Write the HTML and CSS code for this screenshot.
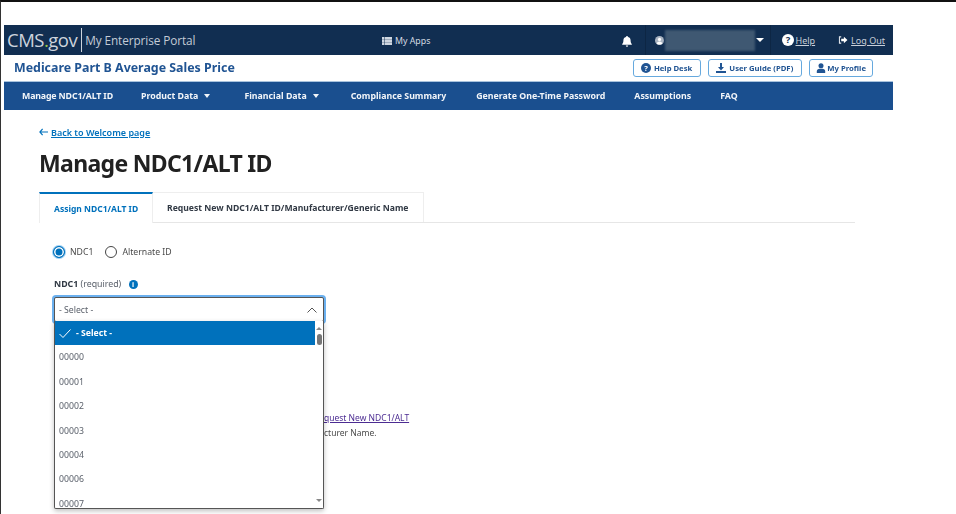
FILE: index.html
```html
<!DOCTYPE html>
<html lang="en">
<head>
<meta charset="utf-8">
<title>Manage NDC1/ALT ID</title>
<link rel="stylesheet" href="styles.css">
</head>
<body>
<div class="frame">
  <div class="app">
    <header class="topbar">
      <div class="brand">
        <span class="logo">CMS<span class="dot">.</span>gov</span>
        <span class="portal">My Enterprise Portal</span>
      </div>
      <a class="apps">
        <svg class="ic-apps" viewBox="0 0 10 8"><path d="M0 0h2.500v2.400H0zM0 2.800h2.500v2.400H0zM0 5.600h2.500V8H0zM3 0h7v2.400H3zM3 2.800h7v2.400H3zM3 5.600h7V8H3z" fill="#cfd6e0"/></svg>
        My Apps
      </a>
      <div class="tools">
        <svg class="ic-bell" viewBox="0 0 10 11"><path d="M5 0a1 1 0 0 1 1 1c2 .4 2.600 2 2.600 3.600 0 2 .6 2.800 1.200 3.400v.8H.2V8C.8 7.400 1.400 6.600 1.400 4.600 1.400 3 2 1.400 4 1a1 1 0 0 1 1-1zM3.800 9.500h2.400A1.200 1.200 0 0 1 3.800 9.500z" fill="#fff"/></svg>
        <div class="user">
          <svg class="ic-user" viewBox="0 0 10 10"><circle cx="5" cy="5" r="5" fill="#aab4c2"/><circle cx="5" cy="3.800" r="1.800" fill="#fff"/><path d="M1.800 8.200a3.400 3 0 0 1 6.400 0 5 5 0 0 1-6.400 0z" fill="#fff"/></svg>
          <span class="blur"></span>
          <span class="caret-w"></span>
        </div>
        <a class="help">
          <svg class="ic-help" viewBox="0 0 12 12"><circle cx="6" cy="6" r="6" fill="#fff"/><text x="6" y="9.300" text-anchor="middle" class="ic-q">?</text></svg>
          <span>Help</span>
        </a>
        <a class="logout">
          <svg class="ic-logout" viewBox="0 0 11 9"><path d="M3.500 1H1.500v7h2" fill="none" stroke="#dfe3ea" stroke-width="1.200"/><path d="M3.500 3h3V.8L10.500 4.500 6.500 8.200V6h-3z" fill="#fff"/></svg>
          <span>Log Out</span>
        </a>
      </div>
    </header>
    <div class="subbar">
      <div class="appname">Medicare Part B Average Sales Price</div>
      <div class="actions">
        <a class="btn">
          <svg class="ic-btn" viewBox="0 0 10 10"><circle cx="5" cy="5" r="5" fill="#205493"/><text x="5" y="8" text-anchor="middle" class="ic-q2">?</text></svg>
          Help Desk
        </a>
        <a class="btn">
          <svg class="ic-btn" viewBox="0 0 10 10"><path d="M4 0h2v4h2L5 7.500 2 4h2zM0 8h10v2H0z" fill="#205493"/></svg>
          User Guide (PDF)
        </a>
        <a class="btn btn-tight">
          <svg class="ic-btn" viewBox="0 0 10 10"><circle cx="5" cy="2.700" r="2.500" fill="#205493"/><path d="M.8 10V8C.8 6.300 2.500 5.800 5 5.800S9.200 6.300 9.200 8v2z" fill="#205493"/></svg>
          My Profile
        </a>
      </div>
    </div>
    <nav class="mainnav">
      <a class="navitem n1">Manage NDC1/ALT ID</a>
      <a class="navitem n2">Product Data <i class="caret-s"></i></a>
      <a class="navitem n3">Financial Data <i class="caret-s"></i></a>
      <a class="navitem n4">Compliance Summary</a>
      <a class="navitem n5">Generate One-Time Password</a>
      <a class="navitem n6">Assumptions</a>
      <a class="navitem">FAQ</a>
    </nav>
    <main class="content">
      <a class="back">
        <svg class="ic-back" viewBox="0 0 10 8"><path d="M4 .5L1 4l3 3.500M1 4h9" fill="none" stroke="#0071bc" stroke-width="1.300"/></svg>
        <span>Back to Welcome page</span>
      </a>
      <h1 class="title">Manage NDC1/ALT ID</h1>
      <div class="tabs">
        <div class="tab active">Assign NDC1/ALT ID</div>
        <div class="tab">Request New NDC1/ALT ID/Manufacturer/Generic Name</div>
      </div>
      <div class="radios">
        <label class="radio"><span class="rb on"></span>NDC1</label>
        <label class="radio"><span class="rb"></span>Alternate ID</label>
      </div>
      <div class="field">
        <div class="flabel"><b>NDC1</b> (required) <span class="info">i</span></div>
        <div class="selectwrap">
          <div class="select">
            <span>- Select -</span>
            <svg class="chev" viewBox="0 0 10 6"><path d="M.5 5.500L5 1l4.500 4.500" fill="none" stroke="#555" stroke-width="1"/></svg>
          </div>
          <div class="list">
            <div class="options">
              <div class="opt sel"><svg class="check" viewBox="0 0 12 9"><path d="M.5 5l3.500 3.500L11.500.5" fill="none" stroke="#fff" stroke-width="1"/></svg>- Select -</div>
              <div class="opt">00000</div>
              <div class="opt">00001</div>
              <div class="opt">00002</div>
              <div class="opt">00003</div>
              <div class="opt">00004</div>
              <div class="opt">00006</div>
              <div class="opt">00007</div>
            </div>
            <div class="scroll">
              <i class="arr up"></i>
              <i class="thumb"></i>
              <i class="arr down"></i>
            </div>
          </div>
        </div>
        <div class="note">
          <div class="noteline"><a class="notelink">quest New NDC1/ALT</a></div>
          <div class="noteline">cturer Name.</div>
        </div>
      </div>
    </main>
  </div>
</div>
</body>
</html>
```
FILE: styles.css
```css
* { box-sizing: border-box; }
html, body { margin: 0; height: 100%; overflow: hidden; background: #fff; }
body { font-family: "Noto Sans", "Liberation Sans", sans-serif; color: #323a45; }
.frame { height: 514px; border-top: 2px solid #111; border-left: 1px solid #333; padding: 23px 0 0 3px; overflow: hidden; }
.app { width: 889px; filter: blur(.3px); }
.topbar { height: 30px; background: #112e51; display: flex; align-items: center; position: relative; padding-left: 3px; }
.brand { display: flex; align-items: center; width: 375px; color: #c9d0da; }
.logo { font-family: "Open Sans", sans-serif; font-size: 18.500px; letter-spacing: -.5px; color: #cdd4dd; padding-right: 4px; border-right: 1px solid #cdd4dd; height: 24px; line-height: 24px; }
.dot { color: #9bc54a; }
.portal { font-family: "Open Sans", sans-serif; font-size: 11.800px; padding-left: 3px; color: #c3cbd6; letter-spacing: -.1px; }
.apps { display: flex; align-items: center; gap: 3px; font-size: 8.800px; color: #d4dae2; margin-top: 1px; }
.ic-apps { width: 10px; height: 8px; }
.tools { margin-left: auto; display: flex; align-items: center; height: 100%; }
.ic-bell { width: 10px; height: 11px; margin-top: 2px; }
.user { display: flex; align-items: center; margin-left: 13px; padding-left: 9px; height: 100%; border-left: 1px solid #0d2644; border-right: 1px solid #0d2644; padding-right: 6px; }
.ic-user { width: 9px; height: 9px; }
.blur { width: 90px; height: 21px; background: #3f5872; margin-left: 1px; filter: blur(1px); }
.caret-w { width: 0; height: 0; border: 4px solid transparent; border-top: 4px solid #fff; border-bottom: 0; margin-left: 1px; }
.help { display: flex; align-items: center; gap: 2px; margin-left: 11px; font-size: 9px; color: #c9d0da; text-decoration: underline; }
.ic-help { width: 12px; height: 12px; }
.ic-q { font: 700 9.500px "Noto Sans", sans-serif; fill: #112e51; }
.logout { display: flex; align-items: center; gap: 3px; margin-left: 23px; margin-right: 8px; font-size: 9px; color: #c9d0da; text-decoration: underline; }
.ic-logout { width: 10px; height: 8px; }
.subbar { height: 27px; display: flex; align-items: center; justify-content: space-between; padding: 0 20px 1px 10px; border-bottom: 1px solid #a9c3de; }
.appname { font-size: 12.400px; font-weight: 700; color: #205493; }
.actions { display: flex; gap: 7px; }
.btn { height: 18px; display: flex; align-items: center; gap: 3px; padding: 0 8px 0 7px; border: 1.500px solid #66a9de; border-radius: 3px; font-size: 7.700px; font-weight: 700; color: #205493; }
.btn-tight { gap: 1px; padding: 0 6px; }
.ic-btn { width: 10px; height: 10px; }
.ic-q2 { font: 700 7.500px "Noto Sans", sans-serif; fill: #fff; }
.mainnav { height: 28px; background: #1a4f8f; display: flex; align-items: center; padding: 0 0 1px 18px; }
.navitem { font-size: 8.800px; font-weight: 700; color: #f2f5f9; white-space: nowrap; display: flex; align-items: center; gap: 6px; }
.n1 { margin-right: 28px; letter-spacing: -.15px; }
.n2 { margin-right: 34px; }
.n3 { margin-right: 32px; }
.n4 { margin-right: 30px; }
.n5 { margin-right: 29px; }
.n6 { margin-right: 29px; }
.caret-s { width: 0; height: 0; border: 3.500px solid transparent; border-top: 4px solid #f2f5f9; border-bottom: 0; }
.content { padding: 16px 0 0 35px; width: 851px; }
.back { display: flex; align-items: center; gap: 3px; font-size: 9px; font-weight: 600; color: #0071bc; height: 12px; }
.back span { text-decoration: underline; }
.ic-back { width: 9px; height: 8px; }
.title { margin: 9px 0 0; font-size: 23px; line-height: 32px; font-weight: 700; color: #212121; letter-spacing: -.67px; }
.tabs { display: flex; margin-top: 13px; border-bottom: 1px solid #e6e6e6; height: 31px; }
.tab { padding: 0 14px; height: 30px; display: flex; align-items: center; white-space: nowrap; font-size: 8.630px; font-weight: 700; color: #323a45; border: 1px solid #eee; border-bottom: 0; border-left: 0; }
.tab.active { width: 114px; height: 31px; background: #fff; color: #0071bc; border-top: 2px solid #0071bc; border-left: 1px solid #eee; font-size: 8.500px; }
.radios { display: flex; gap: 12px; margin: 15px 0 0 14px; height: 27px; }
.radio { display: flex; align-items: center; gap: 5px; height: 27px; font-size: 8.700px; color: #4a4a4a; }
.rb { width: 12px; height: 12px; border-radius: 50%; border: 1.500px solid #444; background: #fff; }
.rb.on { border: 1.500px solid #0071bc; background: #0071bc; box-shadow: inset 0 0 0 1.500px #fff, 0 0 0 1px #9fd0f3; }
.field { margin: 12px 0 0 15px; position: relative; }
.flabel { font-size: 8.800px; color: #5b616b; height: 14px; line-height: 14px; }
.flabel b { color: #323a45; }
.info { display: inline-block; width: 9px; height: 9px; border-radius: 50%; background: #0071bc; color: #fff; font-size: 7px; font-weight: 700; text-align: center; line-height: 9px; margin-left: 5px; }
.selectwrap { position: relative; width: 270px; margin-top: 6px; height: 25px; }
.select { width: 270px; height: 25px; border: 1px solid #555; border-radius: 2px; box-shadow: 0 0 0 2px #6bb0ef; display: flex; align-items: center; justify-content: space-between; padding: 1px 6px 0 4px; font-size: 8.700px; color: #5b616b; background: #fff; }
.chev { width: 10px; height: 6px; }
.list { position: absolute; left: 0; top: 24px; width: 270px; height: 188px; background: #fff; border: 1px solid #555; border-top: 0; border-radius: 0 0 2px 2px; box-shadow: 0 2px 5px rgba(0,0,0,.25); display: flex; overflow: hidden; z-index: 2; }
.options { width: 260px; flex: none; }
.opt { height: 24.450px; display: flex; align-items: center; padding-left: 4px; font-size: 8.700px; color: #5b616b; }
.opt.sel { background: #0071bc; color: #fff; font-weight: 700; gap: 5px; height: 24px; }
.check { width: 12px; height: 9px; }
.scroll { flex: 1; position: relative; }
.arr { position: absolute; left: 1px; width: 0; height: 0; border: 3px solid transparent; }
.arr.up { top: 6px; border-bottom: 3px solid #888; border-top: 0; }
.arr.down { bottom: 6px; border-top: 3px solid #888; border-bottom: 0; }
.thumb { position: absolute; left: 2px; top: 13px; width: 5px; height: 11px; border-radius: 3px; background: #777; }
.note { margin: 88px 0 0 270px; font-size: 8.500px; line-height: 15px; color: #4a4a4a; }
.noteline { white-space: nowrap; }
.notelink { color: #4c2c92; text-decoration: underline; }
```
